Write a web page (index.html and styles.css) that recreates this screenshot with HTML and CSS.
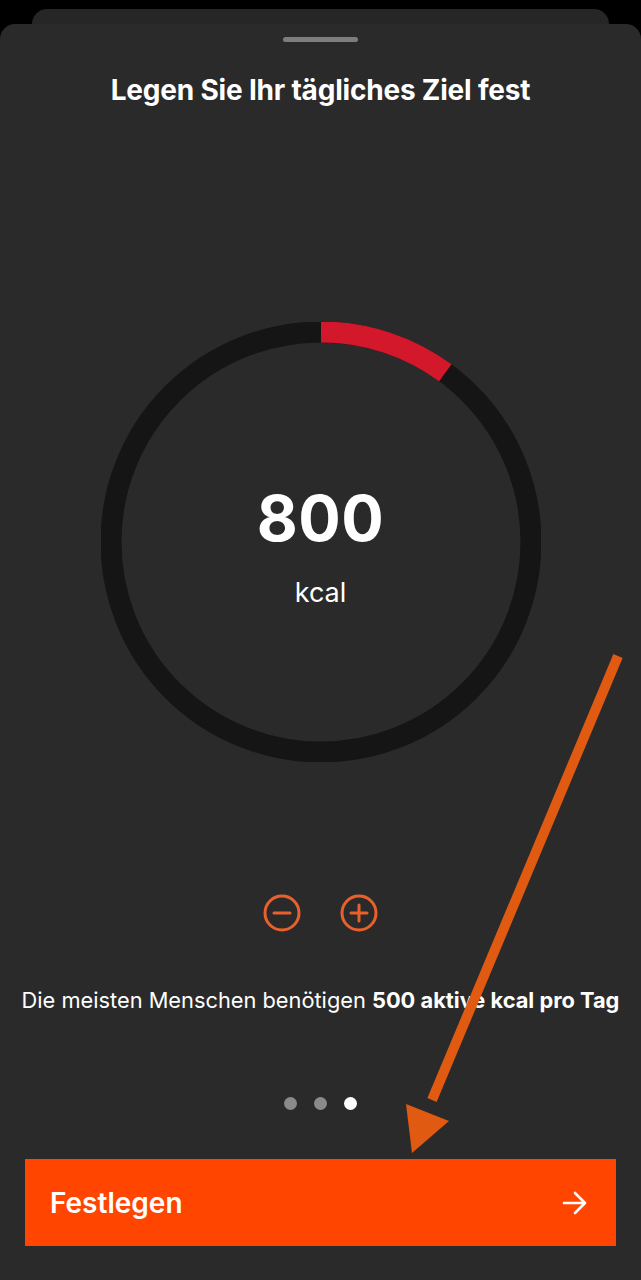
FILE: index.html
```html
<!DOCTYPE html>
<html lang="de">
<head>
<meta charset="utf-8">
<title>Tägliches Ziel</title>
<link rel="stylesheet" href="styles.css">
</head>
<body>
<div class="back-sheet"></div>
<main class="sheet">
  <div class="handle"></div>
  <h1 class="title">Legen Sie Ihr tägliches Ziel fest</h1>

  <div class="ring">
    <svg class="ring-svg" width="440" height="440" viewBox="0 0 440 440">
      <circle cx="220" cy="220" r="210" fill="none" stroke="#151515" stroke-width="21"/>
      <circle cx="220" cy="220" r="210" fill="none" stroke="#d3182c" stroke-width="21"
              stroke-dasharray="133 1400" transform="rotate(-90 220 220)"/>
    </svg>
    <div class="ring-value">
      <div class="value">800</div>
      <div class="unit">kcal</div>
    </div>
  </div>

  <div class="steppers">
    <button class="step" aria-label="Weniger">
      <svg width="38" height="38" viewBox="0 0 38 38"><circle cx="19" cy="19" r="17" fill="none" stroke="#e8612c" stroke-width="3"/><line x1="11" y1="19" x2="27" y2="19" stroke="#e8612c" stroke-width="3" stroke-linecap="round"/></svg>
    </button>
    <button class="step" aria-label="Mehr">
      <svg width="38" height="38" viewBox="0 0 38 38"><circle cx="19" cy="19" r="17" fill="none" stroke="#e8612c" stroke-width="3"/><line x1="11" y1="19" x2="27" y2="19" stroke="#e8612c" stroke-width="3" stroke-linecap="round"/><line x1="19" y1="11" x2="19" y2="27" stroke="#e8612c" stroke-width="3" stroke-linecap="round"/></svg>
    </button>
  </div>

  <p class="hint">Die meisten Menschen benötigen <strong>500 aktive kcal pro Tag</strong></p>

  <div class="dots">
    <span class="dot"></span>
    <span class="dot"></span>
    <span class="dot active"></span>
  </div>

  <button class="cta">
    <span>Festlegen</span>
    <svg width="26" height="26" viewBox="0 0 26 26"><path d="M2 13 H23 M13 3 L23 13 L13 23" fill="none" stroke="#fff" stroke-width="2.6" stroke-linecap="round" stroke-linejoin="round"/></svg>
  </button>
</main>

<svg class="annotation" width="641" height="1280" viewBox="0 0 641 1280">
  <line x1="618" y1="656" x2="432" y2="1100" stroke="#e05a12" stroke-width="10"/>
  <polygon points="406,1104 449,1121 412,1153" fill="#e05a12"/>
</svg>
</body>
</html>
```

FILE: styles.css
```css
* { box-sizing: border-box; }

html, body {
  margin: 0;
  padding: 0;
  background: #000;
}

body {
  width: 641px;
  height: 1280px;
  overflow: hidden;
  position: relative;
  font-family: Inter, "Noto Sans", "Liberation Sans", sans-serif;
  color: #fff;
}

.back-sheet {
  margin: 9px 32px 0;
  height: 15px;
  background: #262626;
  border-radius: 15px 15px 0 0;
}

.sheet {
  height: 1256px;
  background: #2a2a2a;
  border-radius: 15px 15px 0 0;
  display: flex;
  flex-direction: column;
  align-items: center;
}

.handle {
  margin-top: 13px;
  width: 75px;
  height: 5px;
  border-radius: 3px;
  background: #7d7d7d;
}

.title {
  margin: 32px 0 0;
  font-size: 28px;
  line-height: 32px;
  font-weight: 700;
  letter-spacing: -0.2px;
}

.ring {
  margin-top: 216px;
  width: 440px;
  height: 440px;
  display: grid;
  place-items: center;
}

.ring-svg,
.ring-value {
  grid-area: 1 / 1;
}

.ring-value {
  display: flex;
  flex-direction: column;
  align-items: center;
  margin-top: 5px;
}

.value {
  font-size: 63px;
  line-height: 76px;
  font-weight: 700;
  letter-spacing: 0.5px;
}

.unit {
  margin-top: 21px;
  font-size: 27px;
  line-height: 32px;
  font-weight: 400;
}

.steppers {
  margin-top: 132px;
  display: flex;
  gap: 39px;
}

.step {
  width: 38px;
  height: 38px;
  padding: 0;
  border: 0;
  background: none;
  display: block;
}

.step svg { display: block; }

.hint {
  margin: 54px 0 0;
  font-size: 21.8px;
  line-height: 28px;
  font-weight: 400;
  white-space: nowrap;
}

.hint strong { font-weight: 700; }

.dots {
  margin-top: 83px;
  display: flex;
  gap: 17px;
}

.dot {
  width: 13px;
  height: 13px;
  border-radius: 50%;
  background: #8a8a8a;
}

.dot.active { background: #fff; }

.cta {
  margin-top: 49px;
  width: 591px;
  height: 87px;
  border: 0;
  background: #ff4500;
  color: #fff;
  display: flex;
  align-items: center;
  justify-content: space-between;
  padding: 0 28px 0 25px;
  font-family: Inter, "Noto Sans", "Liberation Sans", sans-serif;
  font-size: 28px;
  font-weight: 600;
}

.cta svg { display: block; }

.annotation {
  position: absolute;
  left: 0;
  top: 0;
  pointer-events: none;
}
```
